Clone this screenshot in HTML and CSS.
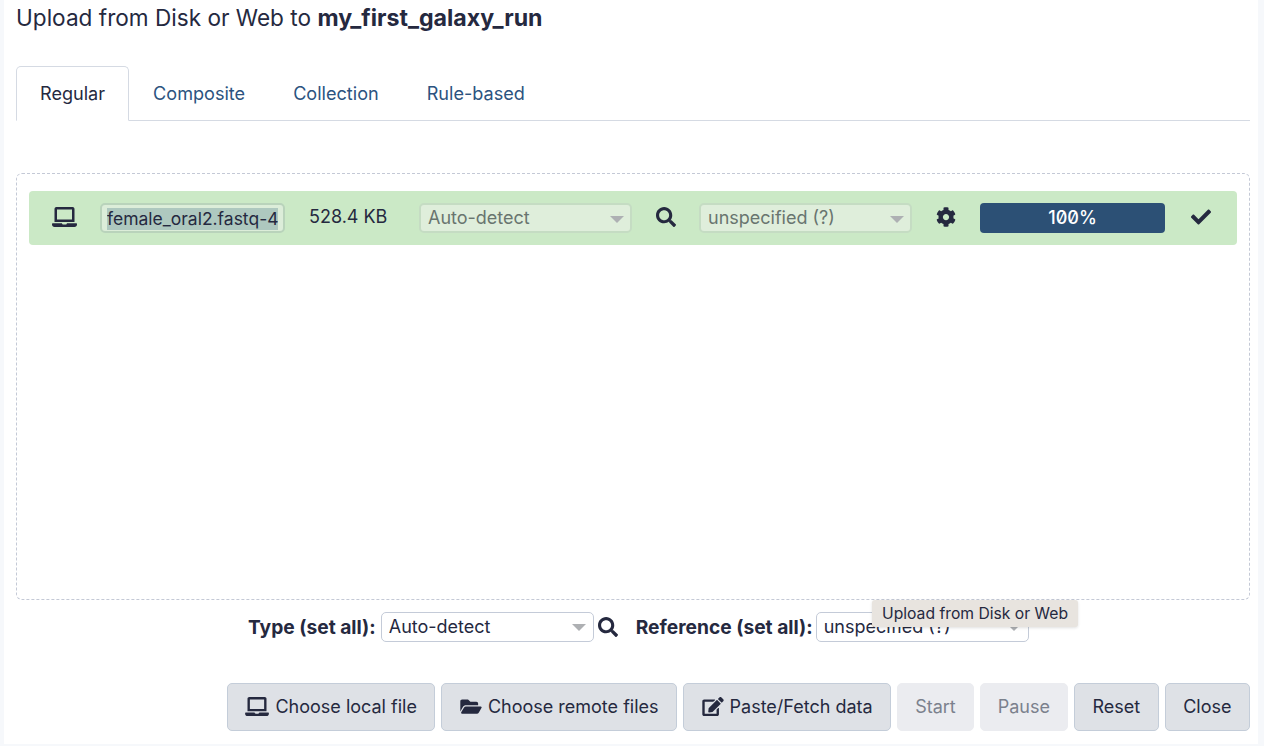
FILE: index.html
```html
<!DOCTYPE html>
<html lang="en">
<head>
    <meta charset="UTF-8">
    <title>Upload from Disk or Web</title>
    <link rel="stylesheet" href="styles.css">
</head>
<body>
    <svg class="sprite" aria-hidden="true">
        <symbol id="i-laptop" viewBox="0 0 640 512"><path d="M624 416H381.54c-.74 19.81-14.71 32-32.74 32H288c-18.69 0-33.02-17.47-32.77-32H16c-8.8 0-16 7.2-16 16v16c0 35.2 28.8 64 64 64h512c35.2 0 64-28.8 64-64v-16c0-8.8-7.2-16-16-16zM576 48c0-26.4-21.6-48-48-48H112C85.6 0 64 21.6 64 48v336h512V48zm-64 272H128V64h384v256z"/></symbol>
        <symbol id="i-search" viewBox="0 0 512 512"><path d="M505 442.7L405.3 343c-4.5-4.5-10.6-7-17-7H372c27.6-35.3 44-79.7 44-128C416 93.1 322.9 0 208 0S0 93.1 0 208s93.1 208 208 208c48.3 0 92.7-16.4 128-44v16.3c0 6.4 2.5 12.5 7 17l99.7 99.7c9.4 9.4 24.6 9.4 33.9 0l28.3-28.3c9.4-9.4 9.4-24.6.1-34zM208 336c-70.7 0-128-57.2-128-128 0-70.7 57.2-128 128-128 70.7 0 128 57.2 128 128 0 70.7-57.2 128-128 128z"/></symbol>
        <symbol id="i-cog" viewBox="0 0 512 512"><path d="M487.4 315.7l-42.6-24.6c4.3-23.2 4.3-47 0-70.2l42.6-24.6c4.9-2.8 7.1-8.6 5.5-14-11.1-35.6-30-67.8-54.7-94.6-3.8-4.1-10-5.1-14.8-2.3L380.8 110c-17.9-15.4-38.5-27.3-60.8-35.1V25.8c0-5.6-3.9-10.5-9.4-11.7-36.7-8.2-74.3-7.8-109.2 0-5.5 1.2-9.4 6.1-9.4 11.7V75c-22.2 7.9-42.8 19.8-60.8 35.1L88.7 85.5c-4.9-2.8-11-1.9-14.8 2.3-24.7 26.7-43.6 58.9-54.7 94.6-1.7 5.4.6 11.2 5.5 14L67.3 221c-4.3 23.2-4.3 47 0 70.2l-42.6 24.6c-4.9 2.8-7.1 8.6-5.5 14 11.1 35.6 30 67.8 54.7 94.6 3.8 4.1 10 5.1 14.8 2.3l42.6-24.6c17.9 15.4 38.5 27.3 60.8 35.1v49.2c0 5.6 3.9 10.5 9.4 11.7 36.7 8.2 74.3 7.8 109.2 0 5.5-1.2 9.4-6.1 9.4-11.7v-49.2c22.2-7.9 42.8-19.8 60.8-35.1l42.6 24.6c4.9 2.8 11 1.9 14.8-2.3 24.7-26.7 43.6-58.9 54.7-94.6 1.5-5.5-.7-11.3-5.6-14.1zM256 336c-44.1 0-80-35.9-80-80s35.9-80 80-80 80 35.9 80 80-35.9 80-80 80z"/></symbol>
        <symbol id="i-check" viewBox="0 0 512 512"><path d="M173.898 439.404l-166.4-166.4c-9.997-9.997-9.997-26.206 0-36.204l36.203-36.204c9.997-9.998 26.207-9.998 36.204 0L192 312.69 432.095 72.596c9.997-9.997 26.207-9.997 36.204 0l36.203 36.204c9.997 9.997 9.997 26.206 0 36.204l-294.4 294.401c-9.998 9.997-26.207 9.997-36.204-.001z"/></symbol>
        <symbol id="i-folder" viewBox="0 0 576 512"><path d="M572.694 292.093L500.27 416.248A63.997 63.997 0 0 1 444.989 448H45.025c-18.523 0-30.064-20.093-20.731-36.093l72.424-124.155A64 64 0 0 1 152 256h399.964c18.523 0 30.064 20.093 20.73 36.093zM152 224h328v-48c0-26.51-21.49-48-48-48H272l-64-64H48C21.49 64 0 85.49 0 112v278.046l69.077-118.418C86.214 242.25 117.989 224 152 224z"/></symbol>
        <symbol id="i-edit" viewBox="0 0 576 512"><path d="M402.6 83.2l90.2 90.2c3.8 3.8 3.8 10 0 13.8L274.4 405.6l-92.8 10.3c-12.4 1.4-22.9-9.1-21.5-21.5l10.3-92.8L388.8 83.2c3.8-3.8 10-3.8 13.8 0zm162-22.9l-48.8-48.8c-15.2-15.2-39.9-15.2-55.2 0l-35.4 35.4c-3.8 3.8-3.8 10 0 13.8l90.2 90.2c3.8 3.8 10 3.8 13.8 0l35.4-35.4c15.2-15.3 15.2-40 0-55.2zM384 346.2V448H64V128h229.8c3.2 0 6.2-1.3 8.5-3.5l40-40c7.6-7.6 2.2-20.5-8.5-20.5H48C21.5 64 0 85.5 0 112v352c0 26.5 21.5 48 48 48h352c26.5 0 48-21.5 48-48V306.2c0-10.7-12.9-16-20.5-8.5l-40 40c-2.2 2.3-3.5 5.3-3.5 8.5z"/></symbol>
    </svg>

    <div class="modal">
        <h2 class="title">Upload from Disk or Web to <b>my_first_galaxy_run</b></h2>

        <div class="tabs">
            <a class="tab active">Regular</a>
            <a class="tab">Composite</a>
            <a class="tab">Collection</a>
            <a class="tab">Rule-based</a>
        </div>

        <div class="dropzone">
            <div class="file-row">
                <svg class="icon icon-laptop"><use href="#i-laptop"/></svg>
                <div class="name-box"><span class="selected">female_oral2.fastq-4</span></div>
                <div class="size">528.4 KB</div>
                <div class="select faded"><span>Auto-detect</span><i class="caret"></i></div>
                <svg class="icon icon-sm"><use href="#i-search"/></svg>
                <div class="select faded"><span>unspecified (?)</span><i class="caret"></i></div>
                <svg class="icon icon-sm"><use href="#i-cog"/></svg>
                <div class="progress">100%</div>
                <svg class="icon icon-sm"><use href="#i-check"/></svg>
            </div>
        </div>

        <div class="set-all">
            <label>Type (set all):</label>
            <div class="select"><span>Auto-detect</span><i class="caret"></i></div>
            <svg class="icon icon-sm search-all"><use href="#i-search"/></svg>
            <label class="ref-label">Reference (set all):</label>
            <div class="select"><span>unspecified (?)</span><i class="caret"></i></div>
            <div class="tooltip">Upload from Disk or Web</div>
        </div>

        <div class="buttons">
            <button class="btn"><svg class="icon icon-btn icon-btn-wide"><use href="#i-laptop"/></svg>Choose local file</button>
            <button class="btn"><svg class="icon icon-btn"><use href="#i-folder"/></svg>Choose remote files</button>
            <button class="btn"><svg class="icon icon-btn"><use href="#i-edit"/></svg>Paste/Fetch data</button>
            <button class="btn disabled">Start</button>
            <button class="btn disabled">Pause</button>
            <button class="btn">Reset</button>
            <button class="btn">Close</button>
        </div>
    </div>
</body>
</html>
```

FILE: styles.css
```css
html, body {
    margin: 0;
    height: 100%;
}
body {
    background-color: #f6f8fb;
    font-family: Inter, "Noto Sans", sans-serif;
    font-size: 18px;
    color: #25293f;
    overflow: hidden;
}
.sprite {
    display: none;
}
.modal {
    box-sizing: border-box;
    width: 1254px;
    height: 744px;
    margin-left: 4px;
    padding: 5px 8px 0 12px;
    background-color: #fff;
}
.title {
    margin: 0;
    height: 61px;
    font-size: 22.6px;
    line-height: 26px;
    font-weight: 400;
    white-space: nowrap;
}
.title b {
    font-size: 23.2px;
    font-weight: 700;
}

/* tabs */
.tabs {
    display: flex;
    height: 55px;
    box-sizing: border-box;
    border-bottom: 1px solid #d5dae3;
}
.tab {
    height: 54px;
    line-height: 55px;
    padding: 0 24px;
    font-size: 18.1px;
    color: #2c5380;
}
.active {
    height: 55px;
    box-sizing: border-box;
    line-height: 53px;
    padding: 0 23px;
    color: #25293f;
    background-color: #fff;
    border: 1px solid #d5dae3;
    border-bottom-color: #fff;
    border-radius: 5px 5px 0 0;
}

/* drop area */
.dropzone {
    box-sizing: border-box;
    height: 427px;
    margin-top: 52px;
    padding: 17px 12px;
    border: 1px dashed #c4c9d6;
    border-radius: 6px;
}
.file-row {
    display: grid;
    grid-template-columns: 71px 185px 134px 213px 67px 213px 68px 185px 1fr;
    align-items: center;
    justify-items: center;
    height: 54px;
    background-color: #cbe9c6;
    border-radius: 4px;
}
.icon {
    display: block;
    fill: #25293f;
}
.icon-laptop {
    width: 25px;
    height: 20px;
    margin-top: -3px;
}
.icon-sm {
    width: 20px;
    height: 20px;
    margin-top: -2px;
}
.name-box {
    box-sizing: border-box;
    width: 185px;
    height: 30px;
    padding: 3px 5px;
    overflow: hidden;
    white-space: nowrap;
    font-size: 17.5px;
    line-height: 22px;
    border: 2px solid #b9d3bb;
    border-radius: 5px;
    background-color: #dcedd9;
}
.selected {
    display: block;
    background-color: #aec8bf;
    overflow: hidden;
}
.size {
    justify-self: start;
    padding-left: 24px;
    margin-top: -3px;
}
.select {
    position: relative;
    box-sizing: border-box;
    width: 213px;
    height: 30px;
    padding: 0 7px;
    line-height: 28px;
    white-space: nowrap;
    background-color: #fff;
    border: 1px solid #c4cbd8;
    border-radius: 5px;
}
.faded {
    background-color: #dfeedb;
    border: 2px solid #c5dcc3;
    line-height: 26px;
    color: #69756f;
}
.caret {
    position: absolute;
    right: 7px;
    top: 11px;
    width: 0;
    height: 0;
    border-left: 7px solid transparent;
    border-right: 7px solid transparent;
    border-top: 7px solid #aeb0b3;
}
.faded .caret {
    right: 6px;
}
.progress {
    box-sizing: border-box;
    width: 185px;
    height: 30px;
    line-height: 30px;
    text-align: center;
    color: #fff;
    font-weight: 500;
    font-feature-settings: "zero";
    background-color: #2c5075;
    border-radius: 4px;
}

/* set all row */
.set-all {
    position: relative;
    display: flex;
    align-items: center;
    height: 30px;
    margin-top: 12px;
    padding-left: 232px;
}
.set-all label {
    font-size: 19.2px;
    font-weight: 700;
    margin-right: 5px;
    white-space: nowrap;
}
.search-all {
    margin: 0 0 0 4px;
}
.set-all .ref-label {
    margin-left: 18px;
    margin-right: 3px;
}
.tooltip {
    position: absolute;
    left: 856px;
    top: -12px;
    width: 206px;
    height: 27px;
    line-height: 27px;
    text-align: center;
    font-size: 15.7px;
    background-color: #e8e4df;
    border-radius: 3px;
    box-shadow: 0 1px 3px rgba(0, 0, 0, 0.12);
}

/* footer buttons */
.buttons {
    display: flex;
    justify-content: flex-end;
    gap: 6px;
    margin-top: 41px;
}
.btn {
    display: flex;
    align-items: center;
    gap: 6px;
    box-sizing: border-box;
    height: 48px;
    padding: 0 17.5px 2px;
    font: inherit;
    color: inherit;
    background-color: #dee1e6;
    border: 1px solid #c4cdd9;
    border-radius: 5px;
}
.icon-btn {
    width: 22px;
    height: 19px;
}
.icon-btn-wide {
    width: 24px;
}
.disabled {
    padding: 0 17px 2px;
    color: #7b818d;
    background-color: #ebecf0;
    border-color: #ebecf0;
}
```
